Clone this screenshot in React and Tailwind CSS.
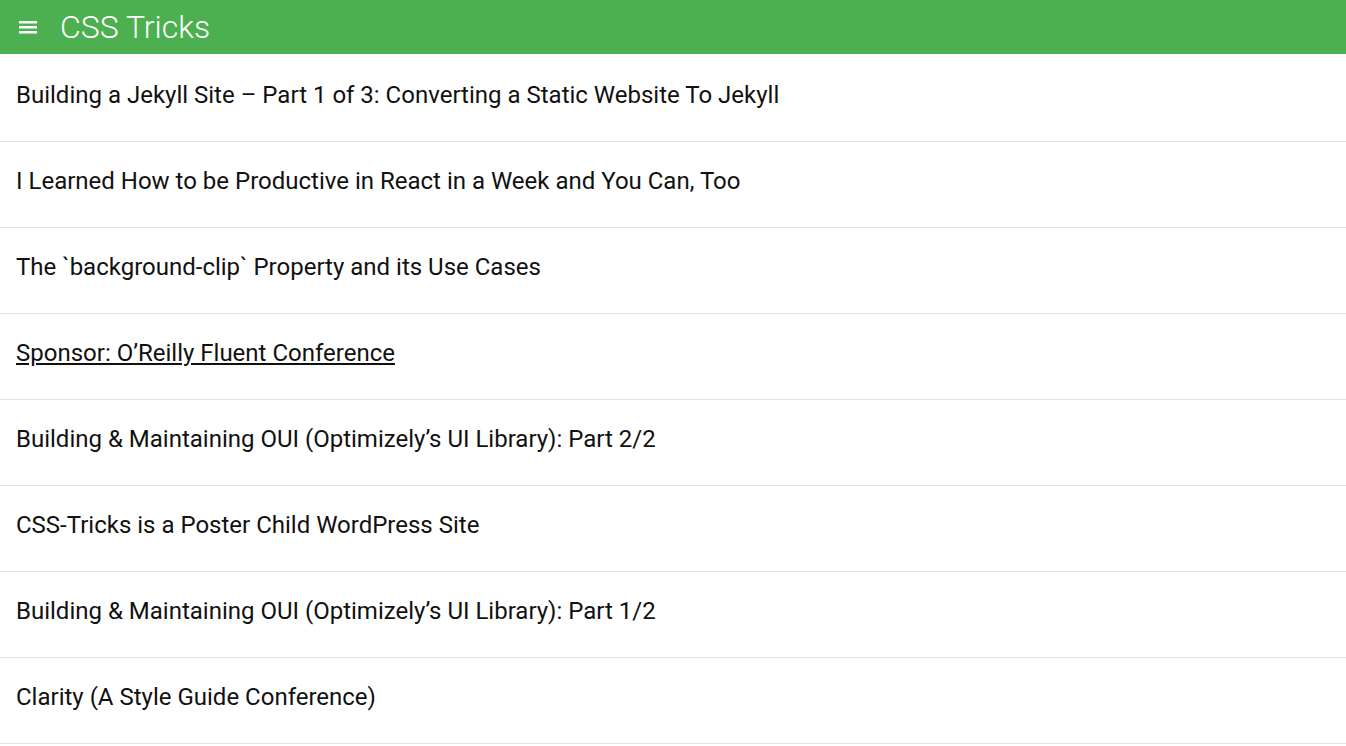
import React from 'react'

const posts = [
  { title: 'Building a Jekyll Site – Part 1 of 3: Converting a Static Website To Jekyll' },
  { title: 'I Learned How to be Productive in React in a Week and You Can, Too' },
  { title: 'The `background-clip` Property and its Use Cases' },
  { title: 'Sponsor: O’Reilly Fluent Conference', sponsor: true },
  { title: 'Building & Maintaining OUI (Optimizely’s UI Library): Part 2/2' },
  { title: 'CSS-Tricks is a Poster Child WordPress Site' },
  { title: 'Building & Maintaining OUI (Optimizely’s UI Library): Part 1/2' },
  { title: 'Clarity (A Style Guide Conference)' },
]

const App = () => {
  return (
    <main className="w-full min-h-screen bg-white font-['Roboto',sans-serif]">
      <header className="h-[54px] bg-[#4caf50] flex items-center">
        <button className="w-[19px] ml-[19px] flex items-center text-white">
          <svg width="18" height="14" viewBox="0 0 18 14" fill="currentColor">
            <rect x="0" y="1" width="18" height="2.5" />
            <rect x="0" y="6" width="18" height="2.5" />
            <rect x="0" y="11" width="18" height="2.5" />
          </svg>
        </button>
        <h1 className="ml-[22px] text-[32px] font-light text-white leading-none">CSS Tricks</h1>
      </header>

      <ul className="mt-[2px]">
        {posts.map((post, idx) => (
          <li key={idx} className="h-[86px] flex items-center px-4 pb-[8px] border-b border-[#e0e0e0]">
            <span className={`text-[24px] text-[#111] ${post.sponsor ? 'underline underline-offset-2' : ''}`}>
              {post.title}
            </span>
          </li>
        ))}
      </ul>
    </main>
  )
}

export default App
